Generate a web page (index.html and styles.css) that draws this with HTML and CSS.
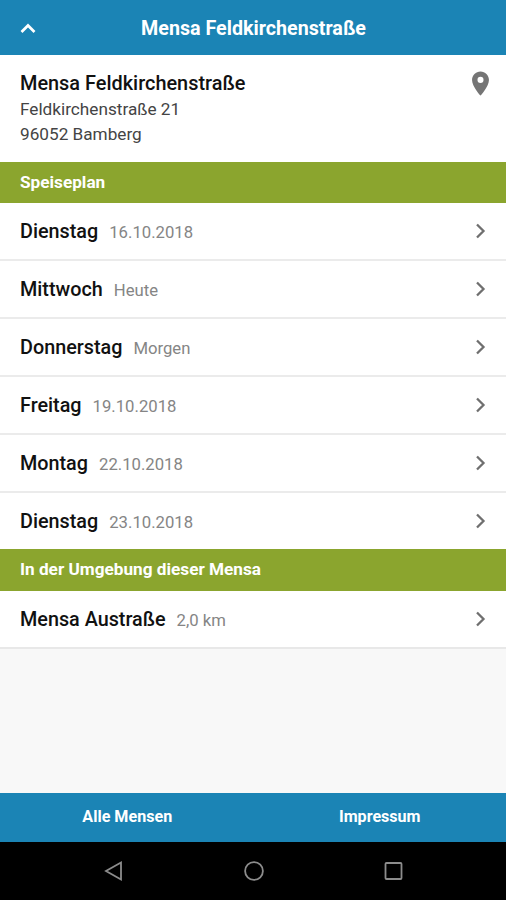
FILE: index.html
```html
<!DOCTYPE html>
<html lang="de">
<head>
  <meta charset="UTF-8">
  <title>Mensa Feldkirchenstraße</title>
  <meta name="viewport" content="width=device-width, initial-scale=1">
  <link rel="stylesheet" href="styles.css">
</head>
<body>
  <svg width="0" height="0" class="symbols">
    <symbol id="chevron" viewBox="0 0 10 16">
      <path d="M1 1.500 7.500 8 1 14.500" fill="none" stroke="#6f6f6f" stroke-width="2.300"/>
    </symbol>
  </svg>

  <header class="header">
    <svg class="back" width="16" height="11" viewBox="0 0 16 11">
      <path d="M1.500 9 8 2.500 14.500 9" fill="none" stroke="#fff" stroke-width="2.700"/>
    </svg>
    <h1>Mensa Feldkirchenstraße</h1>
  </header>

  <main>
    <section class="info">
      <div class="address">
        <h2>Mensa Feldkirchenstraße</h2>
        <p>Feldkirchenstraße 21</p>
        <p>96052 Bamberg</p>
      </div>
      <svg class="pin" width="29" height="29" viewBox="0 0 24 24">
        <path fill="#757575" d="M12 2C8.130 2 5 5.130 5 9c0 5.250 7 13 7 13s7-7.750 7-13c0-3.870-3.130-7-7-7zm0 9.500a2.500 2.500 0 0 1 0-5 2.500 2.500 0 0 1 0 5z"/>
      </svg>
    </section>

    <h3 class="section-title">Speiseplan</h3>
    <ul class="list">
      <li><b>Dienstag</b><span>16.10.2018</span><svg class="arrow"><use href="#chevron"/></svg></li>
      <li><b>Mittwoch</b><span>Heute</span><svg class="arrow"><use href="#chevron"/></svg></li>
      <li><b>Donnerstag</b><span>Morgen</span><svg class="arrow"><use href="#chevron"/></svg></li>
      <li><b>Freitag</b><span>19.10.2018</span><svg class="arrow"><use href="#chevron"/></svg></li>
      <li><b>Montag</b><span>22.10.2018</span><svg class="arrow"><use href="#chevron"/></svg></li>
      <li><b>Dienstag</b><span>23.10.2018</span><svg class="arrow"><use href="#chevron"/></svg></li>
    </ul>

    <h3 class="section-title nearby">In der Umgebung dieser Mensa</h3>
    <ul class="list last">
      <li><b>Mensa Austraße</b><span>2,0 km</span><svg class="arrow"><use href="#chevron"/></svg></li>
    </ul>
  </main>

  <footer class="tabs">
    <a>Alle Mensen</a>
    <a>Impressum</a>
  </footer>

  <nav class="system">
    <svg width="22" height="22" viewBox="0 0 22 22"><path d="M18 2.500v17L3 11z"/></svg>
    <svg width="22" height="22" viewBox="0 0 22 22"><circle cx="11" cy="11" r="8.900"/></svg>
    <svg width="22" height="22" viewBox="0 0 22 22"><rect x="2.500" y="3" width="16" height="16" rx="1"/></svg>
  </nav>
</body>
</html>
```

FILE: styles.css
```css
* {
  box-sizing: border-box;
}
body {
  display: flex;
  flex-direction: column;
  height: 900px;
  margin: 0;
  background: #f8f8f8;
  color: #111;
  font-family: Roboto, sans-serif;
}
h1, h2, h3, p, ul {
  margin: 0;
  padding: 0;
}
.symbols {
  position: absolute;
}
.header {
  display: grid;
  grid-template-columns: 60px 1fr 60px;
  align-items: center;
  height: 55px;
  padding: 2px 0 0 1px;
  background: #1b84b5;
  color: #fff;
}
.back {
  margin-left: 19px;
}
h1 {
  text-align: center;
  font-size: 19.700px;
  font-weight: 700;
  line-height: 24px;
}
main {
  flex: 1;
}
.info {
  display: flex;
  justify-content: space-between;
  height: 107px;
  padding: 16px 11px 0 20px;
  background: #fff;
}
h2 {
  font-size: 19.900px;
  font-weight: 500;
  line-height: 26px;
}
.info p {
  color: #444;
  font-size: 17.200px;
  line-height: 25px;
}
.pin {
  margin-top: -2px;
}
.section-title {
  height: 41px;
  padding-left: 20px;
  background: #8ba52e;
  color: #fff;
  font-size: 17.200px;
  font-weight: 700;
  line-height: 40px;
}
.nearby {
  height: 42px;
}
.list {
  list-style: none;
}
.list li {
  display: flex;
  align-items: center;
  height: 58px;
  padding: 0 20px;
  background: #fff;
  border-bottom: 2px solid #ebebeb;
}
.list li:last-child {
  height: 56px;
  border-bottom: none;
}
.list.last li:last-child {
  height: 58px;
  border-bottom: 2px solid #e8e8e8;
}
.list b {
  font-size: 19.800px;
  font-weight: 500;
}
.list span {
  margin: 2px 0 0 11px;
  color: #858585;
  font-size: 16.700px;
}
.arrow {
  width: 10px;
  height: 16px;
  margin-left: auto;
}
.tabs {
  display: flex;
  height: 49px;
  padding-left: 1px;
  background: #1b84b5;
}
.tabs a {
  flex: 1;
  color: #fff;
  font-size: 16.100px;
  font-weight: 700;
  line-height: 47px;
  text-align: center;
}
.system {
  display: flex;
  justify-content: center;
  align-items: center;
  gap: 118px;
  height: 58px;
  padding-left: 1px;
  background: #000;
}
.system svg {
  fill: none;
  stroke: #8c8c8c;
  stroke-width: 1.800;
}
```
